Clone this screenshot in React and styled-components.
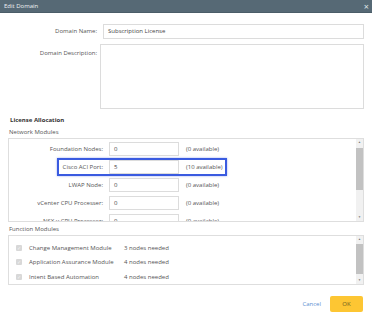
import styled, { createGlobalStyle } from 'styled-components'

const GlobalStyle = createGlobalStyle`
  body {
    margin: 0;
    background: #fff;
    font-family: 'Open Sans', 'Liberation Sans', sans-serif;
  }
`

const networkModules = [
  { name: 'Foundation Nodes:', value: '0', avail: '(0 available)' },
  { name: 'Cisco ACI Port:', value: '5', avail: '(10 available)', highlight: true },
  { name: 'LWAP Node:', value: '0', avail: '(0 available)' },
  { name: 'vCenter CPU Processer:', value: '0', avail: '(0 available)' },
  { name: 'NSX-v CPU Processer:', value: '0', avail: '(0 available)' },
]

const functionModules = [
  { name: 'Change Management Module', need: '3 nodes needed' },
  { name: 'Application Assurance Module', need: '4 nodes needed' },
  { name: 'Intent Based Automation', need: '4 nodes needed' },
]

export default function App() {
  return (
    <Dialog>
      <GlobalStyle />
      <Header>
        <span>Edit Domain</span>
        <Close>×</Close>
      </Header>

      <Body>
        <FormRow>
          <FormLabel>Domain Name:</FormLabel>
          <TextInput>Subscription License</TextInput>
        </FormRow>
        <FormRow>
          <FormLabel $top>Domain Description:</FormLabel>
          <TextArea />
        </FormRow>

        <SectionTitle>License Allocation</SectionTitle>
        <SubTitle>Network Modules</SubTitle>
        <ScrollBox $height={84}>
          <List $pad={1}>
            {networkModules.map((m) => (
              <ModuleRow key={m.name}>
                {m.highlight && <Highlight />}
                <ModuleLabel>{m.name}</ModuleLabel>
                <NumberInput>{m.value}</NumberInput>
                <Avail>{m.avail}</Avail>
              </ModuleRow>
            ))}
          </List>
          <Scrollbar $thumbTop={2} $thumbHeight={42} />
        </ScrollBox>

        <SubTitle $gap={1}>Function Modules</SubTitle>
        <ScrollBox $height={50}>
          <List $pad={5}>
            {functionModules.map((m) => (
              <FuncRow key={m.name}>
                <Check>✓</Check>
                <span>{m.name}</span>
                <span>{m.need}</span>
              </FuncRow>
            ))}
          </List>
          <Scrollbar $thumbTop={1} $thumbHeight={30} />
        </ScrollBox>
      </Body>

      <Footer>
        <CancelButton>Cancel</CancelButton>
        <OkButton>OK</OkButton>
      </Footer>
    </Dialog>
  )
}

function Scrollbar({ $thumbTop, $thumbHeight }) {
  return (
    <Track>
      <Arrow>▲</Arrow>
      <Rail>
        <Thumb style={{ marginTop: $thumbTop, height: $thumbHeight }} />
      </Rail>
      <Arrow>▼</Arrow>
    </Track>
  )
}

const Dialog = styled.div`
  width: 372px;
  height: 320px;
  display: flex;
  flex-direction: column;
  font-size: 6px;
  color: #555;
`

const Header = styled.div`
  height: 13px;
  background-color: #566975;
  color: #eef2f4;
  display: flex;
  align-items: center;
  justify-content: space-between;
  padding: 0 3px 0 4px;
  border-bottom: 1px solid #4b5d68;
  box-sizing: border-box;
`

const Close = styled.span`
  font-size: 9px;
  line-height: 1;
  color: #dfe5e8;
`

const Body = styled.div`
  flex: 1;
  padding: 11px 8px 0 8px;
  display: flex;
  flex-direction: column;
`

const FormRow = styled.div`
  display: flex;
  align-items: flex-start;
  margin-bottom: 5px;
`

const FormLabel = styled.div`
  width: 89px;
  text-align: right;
  padding-right: 6px;
  padding-top: ${(p) => (p.$top ? '2px' : '0')};
  line-height: 15px;
  flex-shrink: 0;
`

const TextInput = styled.div`
  width: 261px;
  height: 15px;
  box-sizing: border-box;
  border: 1px solid #dcdcdc;
  padding-left: 4px;
  line-height: 13px;
  color: #444;
`

const TextArea = styled.div`
  margin-left: -3px;
  width: 264px;
  height: 65px;
  box-sizing: border-box;
  border: 1px solid #dcdcdc;
`

const SectionTitle = styled.div`
  font-weight: 700;
  color: #333;
  margin-left: 2px;
  line-height: 12px;
`

const SubTitle = styled.div`
  line-height: 12px;
  margin-top: ${(p) => p.$gap || 0}px;
  margin-left: 1px;
`

const ScrollBox = styled.div`
  height: ${(p) => p.$height}px;
  width: 356px;
  box-sizing: border-box;
  border: 1px solid #dedede;
  display: flex;
  overflow: hidden;
`

const List = styled.div`
  flex: 1;
  padding-top: ${(p) => p.$pad}px;
  display: flex;
  flex-direction: column;
`

const ModuleRow = styled.div`
  position: relative;
  display: flex;
  align-items: center;
  height: 18px;
  flex-shrink: 0;
`

const Highlight = styled.div`
  position: absolute;
  left: 48px;
  top: 0;
  width: 166px;
  height: 14px;
  border: 2px solid #3a5be0;
  box-shadow: 0 0 2px rgba(58, 91, 224, 0.5);
`

const ModuleLabel = styled.div`
  width: 94px;
  text-align: right;
  padding-right: 6px;
  flex-shrink: 0;
`

const NumberInput = styled.div`
  width: 70px;
  height: 14px;
  box-sizing: border-box;
  border: 1px solid #dcdcdc;
  padding-left: 4px;
  line-height: 12px;
  color: #444;
`

const Avail = styled.span`
  margin-left: 7px;
`

const FuncRow = styled.div`
  display: grid;
  grid-template-columns: 6px 88px auto;
  column-gap: 7px;
  align-items: center;
  height: 15px;
  padding-left: 7px;
  white-space: nowrap;
`

const Check = styled.span`
  width: 6px;
  height: 6px;
  background: #d8d8d8;
  color: #f4f4f4;
  font-size: 5px;
  line-height: 6px;
  text-align: center;
  border-radius: 1px;
  overflow: hidden;
`

const Track = styled.div`
  width: 7px;
  background: #f1f1f1;
  display: flex;
  flex-direction: column;
  align-items: center;
`

const Arrow = styled.span`
  font-size: 3px;
  height: 7px;
  line-height: 7px;
  color: #777;
`

const Rail = styled.div`
  flex: 1;
  width: 100%;
`

const Thumb = styled.div`
  width: 100%;
  background: #c2c2c2;
`

const Footer = styled.div`
  height: 24px;
  box-sizing: border-box;
  display: flex;
  align-items: center;
  justify-content: flex-end;
  gap: 9px;
  padding: 0 9px 8px 0;
`

const CancelButton = styled.span`
  color: #5a8fd2;
`

const OkButton = styled.div`
  width: 33px;
  height: 16px;
  background: #fdc633;
  border-radius: 2px;
  color: #6b5a20;
  display: flex;
  align-items: center;
  justify-content: center;
`
